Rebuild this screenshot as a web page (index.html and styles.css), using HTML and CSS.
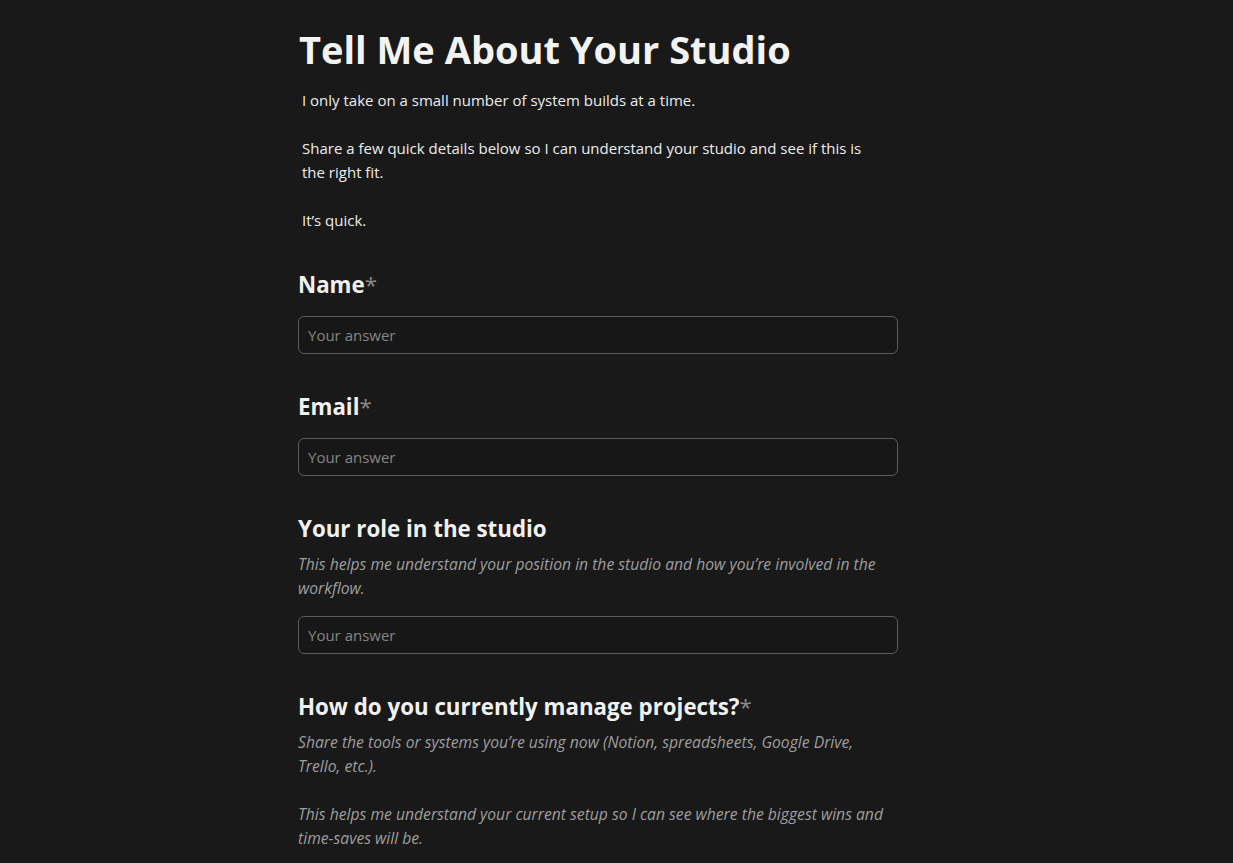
FILE: index.html
```html
<!DOCTYPE html>
<html lang="en">
<head>
<meta charset="utf-8">
<title>Tell Me About Your Studio</title>
<link rel="stylesheet" href="styles.css">
</head>
<body>
<main class="page">
  <h1 class="title">Tell Me About Your Studio</h1>
  <div class="intro">
    <p>I only take on a small number of system builds at a time.</p>
    <p>Share a few quick details below so I can understand your studio and see if this is the right fit.</p>
    <p>It’s quick.</p>
  </div>

  <section class="field">
    <h2 class="label">Name<span class="req">*</span></h2>
    <input class="answer" type="text" placeholder="Your answer">
  </section>

  <section class="field">
    <h2 class="label">Email<span class="req">*</span></h2>
    <input class="answer" type="text" placeholder="Your answer">
  </section>

  <section class="field">
    <h2 class="label">Your role in the studio</h2>
    <div class="desc">
      <p>This helps me understand your position in the studio and how you’re involved in the workflow.</p>
    </div>
    <input class="answer" type="text" placeholder="Your answer">
  </section>

  <section class="field">
    <h2 class="label">How do you currently manage projects?<span class="req">*</span></h2>
    <div class="desc">
      <p>Share the tools or systems you’re using now (Notion, spreadsheets, Google Drive, Trello, etc.).</p>
      <p>This helps me understand your current setup so I can see where the biggest wins and time-saves will be.</p>
    </div>
  </section>
</main>
</body>
</html>
```
FILE: styles.css
```css
html, body {
  margin: 0;
  padding: 0;
  background: #191919;
}
body {
  font-family: "Open Sans", "Noto Sans", sans-serif;
  color: #ededed;
}
.page {
  width: 600px;
  margin-left: 298px;
  padding-top: 25px;
}
.title {
  margin: 0 0 0 1px;
  font-size: 38px;
  line-height: 48px;
  font-weight: 700;
  color: #f3f3f3;
}
.intro {
  margin-top: 15px;
  padding-left: 4px;
  padding-right: 26px;
  font-size: 15px;
  line-height: 24px;
}
.intro p {
  margin: 0 0 24px;
}
.intro p:last-child {
  margin-bottom: 0;
}
.field {
  margin-top: 38px;
}
.label {
  margin: 0;
  font-size: 22.3px;
  line-height: 30px;
  font-weight: 700;
  color: #f1f1f1;
}
.req {
  color: #8a8a8a;
  font-weight: 400;
}
.answer {
  display: block;
  box-sizing: border-box;
  width: 600px;
  height: 38px;
  margin-top: 16px;
  padding: 0 9px;
  background: #171717;
  border: 1px solid #5c5c5c;
  border-radius: 6px;
  font-family: inherit;
  font-size: 15px;
  color: #ededed;
  outline: none;
}
.answer::placeholder {
  color: #858585;
}
.desc {
  margin-top: 8px;
  padding-right: 14px;
  font-size: 15.7px;
  line-height: 24px;
  font-style: italic;
  color: #9e9e9e;
}
.desc p {
  margin: 0 0 24px;
}
.desc p:last-child {
  margin-bottom: 0;
}
.desc + .answer {
  margin-top: 16px;
}
```
